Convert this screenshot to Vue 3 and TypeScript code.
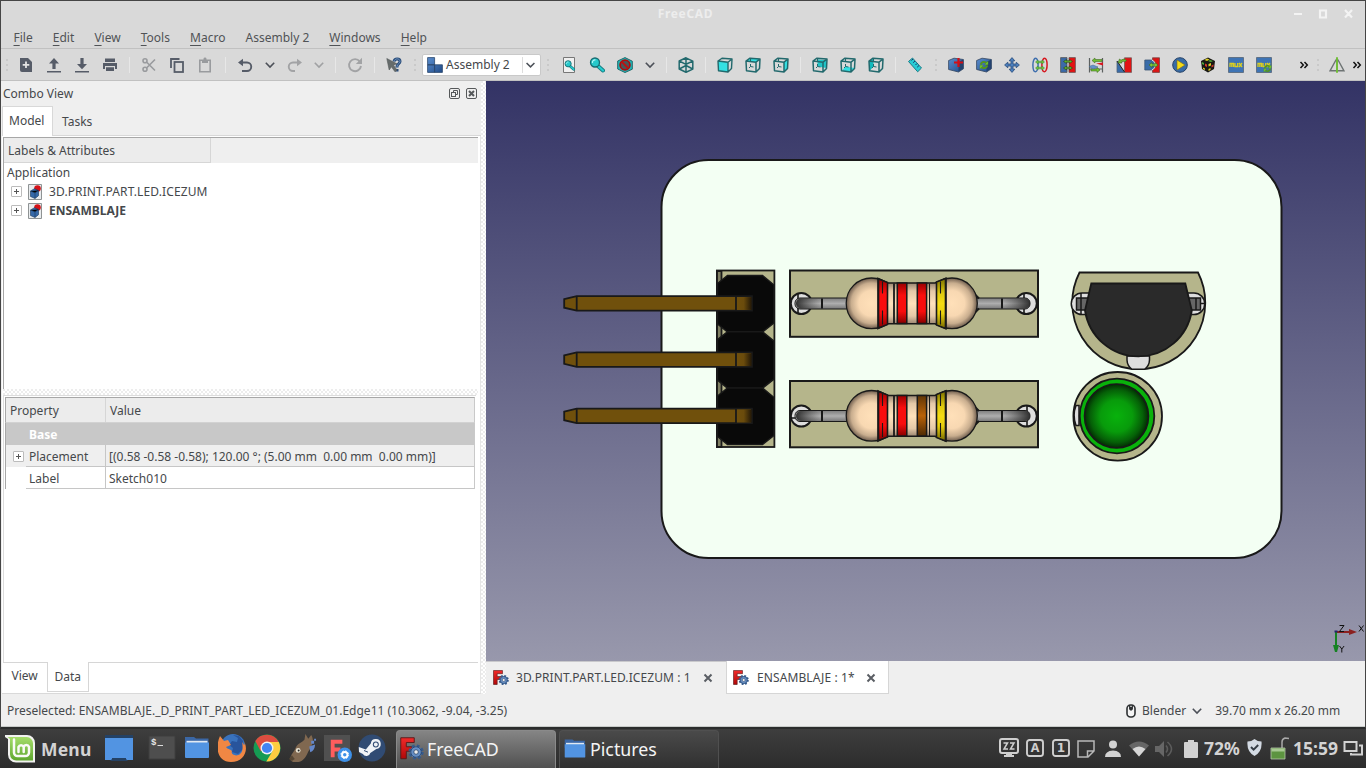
<script setup lang="ts">
interface Tool { icon: string; kind?: 'sep' | 'sep wide' | 'grip' | 'drop' }

const fileTools: string[] = ['new', 'open', 'save', 'print']
const editTools: string[] = ['cut', 'copy', 'paste']
const frontViews: string[] = ['front', 'top', 'right']
const rearViews: string[] = ['rear', 'bottom', 'left']
const assemblyTools: string[] = [
  'part-add', 'part-update', 'move', 'circular', 'plane', 'axial',
  'angle', 'sphere', 'solve', 'rubik', 'mux', 'mux-update',
]
const tools: Tool[] = [
  ...fileTools.map((icon) => ({ icon })),
  { icon: '', kind: 'sep' },
  ...editTools.map((icon) => ({ icon })),
  { icon: '', kind: 'sep wide' },
  { icon: 'undo' }, { icon: 'chev', kind: 'drop' },
  { icon: 'redo' }, { icon: 'chev-off', kind: 'drop' },
  { icon: '', kind: 'sep' },
  { icon: 'refresh' },
  { icon: '', kind: 'sep' },
  { icon: 'whats' },
  { icon: '', kind: 'grip' },
]
const viewTools: Tool[] = [
  { icon: '', kind: 'grip' },
  { icon: 'fit' }, { icon: 'fitsel' }, { icon: 'draw' }, { icon: 'chev', kind: 'drop' },
  { icon: '', kind: 'sep' },
  { icon: 'iso' },
  { icon: '', kind: 'sep' },
  ...frontViews.map((icon) => ({ icon })),
  { icon: '', kind: 'sep' },
  ...rearViews.map((icon) => ({ icon })),
  { icon: '', kind: 'sep' },
  { icon: 'ruler' },
]
const menus: [string, string][] = [
  ['F', 'ile'], ['E', 'dit'], ['V', 'iew'], ['T', 'ools'], ['M', 'acro'],
  ['', 'Assembly 2'], ['W', 'indows'], ['H', 'elp'],
]
const placement = '[(0.58 -0.58 -0.58); 120.00 °; (5.00 mm  0.00 mm  0.00 mm)]'
const pins: number[] = [303.5, 359.7, 416]
const resistors = [
  { y: 303.5, third: 'url(#bandRed)' },
  { y: 416, third: 'url(#bandBrown)' },
]
const launchers: string[] = ['folder', 'firefox', 'chrome', 'squirrel', 'fcapp', 'steam']
</script>

<template>
  <div class="screen">
    <svg class="defs" width="0" height="0" aria-hidden="true">
      <defs>
        <linearGradient id="blueBox" x1="0" y1="0" x2="1" y2="1"><stop offset="0" stop-color="#5b8fd0" /><stop offset="1" stop-color="#204a87" /></linearGradient>
        <linearGradient id="mint" x1="0" y1="0" x2="0" y2="1"><stop offset="0" stop-color="#a5dd6a" /><stop offset="1" stop-color="#5fa72f" /></linearGradient>
        <linearGradient id="redF" x1="0" y1="0" x2="0" y2="1"><stop offset="0" stop-color="#f02a2a" /><stop offset="1" stop-color="#b00808" /></linearGradient>
      </defs>
      <symbol id="i-new" viewBox="0 0 16 16"><path fill="#565c68" d="M2 1h8l4 4v10H4a2 2 0 0 1-2-2z" /><path stroke="#e4e4e4" stroke-width="1.8" d="M8 4.5v6.6M4.7 7.8h6.6" /></symbol>
      <symbol id="i-open" viewBox="0 0 16 16"><path fill="#565c68" d="M8 1l5 5.4h-3.4V12H6.400V6.400H3zM1 14h14v1.600H1z" /></symbol>
      <symbol id="i-save" viewBox="0 0 16 16"><path fill="#565c68" d="M6.400 1h3.200v6H13l-5 5.200L3 7h3.400zM1 14h14v1.600H1z" /></symbol>
      <symbol id="i-print" viewBox="0 0 16 16"><path fill="#565c68" d="M3 1.500h10V5H3zM1 6h14v6h-2V9H3v3H1zM4 10.200h8V14H4z" /></symbol>
      <symbol id="i-cut" viewBox="0 0 16 16"><g fill="none" stroke="#999b9e" stroke-width="1.600"><circle cx="4" cy="3.800" r="2" /><circle cx="4" cy="12.200" r="2" /><path d="M5.500 5L14 13.500M5.500 11L14 2.500" /></g></symbol>
      <symbol id="i-copy" viewBox="0 0 16 16"><g fill="none" stroke="#565c68" stroke-width="1.800"><path d="M2 11V2h8.500" /><rect x="5.500" y="5" width="8.500" height="10" /></g></symbol>
      <symbol id="i-paste" viewBox="0 0 16 16"><path fill="none" stroke="#999b9e" stroke-width="1.600" d="M2.800 3.200h10.400v11.600H2.800z" /><path fill="#999b9e" d="M5 3h1.500V1.800A1.500 1.500 0 0 1 8 .5a1.500 1.500 0 0 1 1.500 1.300V3H11v3H5z" /></symbol>
      <symbol id="i-undo" viewBox="0 0 16 16"><path fill="none" stroke="#565c68" stroke-width="1.900" d="M5 5.500h5a3.900 3.900 0 0 1 0 8.500H5" /><path fill="#565c68" d="M1 5.500L6 1.800v7.400z" /></symbol>
      <symbol id="i-redo" viewBox="0 0 16 16"><path fill="none" stroke="#a2a3a5" stroke-width="1.900" d="M10 5.500H6A3.900 3.900 0 0 0 6 14h2" /><path fill="#a2a3a5" d="M15 5.500L10 1.800v7.400z" /></symbol>
      <symbol id="i-chev" viewBox="0 0 16 16"><path fill="none" stroke="#4c5058" stroke-width="1.600" d="M3.800 5.800L8 10l4.200-4.200" /></symbol>
      <symbol id="i-chev-off" viewBox="0 0 16 16"><path fill="none" stroke="#a0a1a3" stroke-width="1.600" d="M3.800 5.800L8 10l4.200-4.200" /></symbol>
      <symbol id="i-refresh" viewBox="0 0 16 16"><path fill="none" stroke="#a2a3a5" stroke-width="1.900" d="M12.800 4.500A6 6 0 1 0 14 9" /><path fill="#a2a3a5" d="M15 .8v6.200H8.800z" /></symbol>
      <symbol id="i-whats" viewBox="0 0 16 16"><path fill="none" stroke="#284b78" stroke-width="3" d="M8 4.500C8.500 1 14 1 14 4.500c0 2.500-3 2.200-3 5v1M11 12v2.500" /><path fill="none" stroke="#7194c0" stroke-width="1" d="M8 4.500C8.500 1 14 1 14 4.500c0 2.500-3 2.200-3 5v1" /><path fill="#666c6c" stroke="#555b5b" stroke-width=".6" d="M.8 1.500l10 5.200-3.300 1.500L11 13l-2 1.800-3.600-5L3.200 13z" /></symbol>

      <symbol id="cube" viewBox="0 0 16 16"><g fill="none" stroke="#22696d" stroke-width="1.500" stroke-linejoin="round"><path d="M1 4l4-2.800 10 .8-.5 9.500L11 15l-9.500-1.200zM1 4l10 1.200L15 2M11 5.200V15" /><path stroke-width="1" d="M5.500 2v3M5.500 7v2.500L4 11M5.500 9.500l3 .500" /></g></symbol>
      <symbol id="i-front" viewBox="0 0 16 16"><path fill="#35e0e2" d="M1 4l10 1.200V15l-9.500-1.200z" /><path fill="none" stroke="#22696d" stroke-width="1.400" stroke-linejoin="round" d="M1 4l4-2.800 10 .8-.5 9.500L11 15l-9.500-1.200zM1 4l10 1.200L15 2M11 5.200V15" /></symbol>
      <symbol id="i-top" viewBox="0 0 16 16"><path fill="#35e0e2" d="M1 4l4-2.800L15 2l-4 3.200z" /><use href="#cube" /></symbol>
      <symbol id="i-right" viewBox="0 0 16 16"><path fill="#35e0e2" d="M11 5.200L15 2l-.5 9.500L11 15z" /><use href="#cube" /></symbol>
      <symbol id="i-rear" viewBox="0 0 16 16"><path fill="#1fc4c7" d="M5.500 2.500l9 .5v8l-9-1.500z" /><use href="#cube" /></symbol>
      <symbol id="i-bottom" viewBox="0 0 16 16"><path fill="#35e0e2" d="M2 13.500l3.500-4 9 1.500-3.500 4z" /><use href="#cube" /></symbol>
      <symbol id="i-left" viewBox="0 0 16 16"><path fill="#12babd" d="M1 4l4.500-2.500v8L2 13.500z" /><use href="#cube" /></symbol>
      <symbol id="i-iso" viewBox="0 0 16 16"><path fill="none" stroke="#22696d" stroke-width="1.500" stroke-linejoin="round" d="M8 .8l6.800 3.300v8L8 15.200 1.200 12V4zM1.200 4L8 7.300l6.800-3.200M8 .8v14.400M1.200 12L8 8.500l6.800 3.500" /></symbol>
      <symbol id="lens" viewBox="0 0 16 16"><path stroke="#167c80" stroke-width="4" stroke-linecap="round" d="M9 9l5 4.500" /><path stroke="#24cdd0" stroke-width="2.200" stroke-linecap="round" d="M9 9l5 4.500" /><circle cx="6" cy="5.500" r="4.500" fill="#26c9cb" stroke="#176c72" stroke-width="1.300" /><path fill="none" stroke="#b7f6f6" stroke-width="1.200" d="M3.500 6a2.500 2.500 0 0 1 3-3" /></symbol>
      <symbol id="i-fit" viewBox="0 0 16 16"><path fill="#f0f0f0" stroke="#777" d="M2.500.5h11v15h-11z" /><use href="#lens" x="3" y="3" width="11" height="11" /></symbol>
      <symbol id="i-fitsel" viewBox="0 0 16 16"><use href="#lens" width="16" height="16" /></symbol>
      <symbol id="i-draw" viewBox="0 0 16 16"><path fill="#1fb9bb" stroke="#226a6c" d="M8 .6l7.300 3.600v8L8 15.500.7 12V4z" /><circle cx="8" cy="8" r="4.900" fill="#47595a" stroke="#b00c0c" stroke-width="1.800" /><path stroke="#c01010" stroke-width="2" d="M4.600 4.600l6.800 6.800" /></symbol>
      <symbol id="i-ruler" viewBox="0 0 16 16"><path fill="#29cbd3" stroke="#1d7d87" d="M1.500 4.500l4-3.500 9 10-3.800 3.800z" /><path stroke="#115" stroke-width=".8" d="M6 2l-1.500 1.500M8 4L6.200 5.700M10 6.500L8.500 8M12 8.500l-1.800 1.700" /></symbol>
      <symbol id="box" viewBox="0 0 16 16"><path fill="url(#blueBox)" stroke="#34455e" stroke-width=".8" d="M.6 3.500L6 1.200l9.400 1.300v9.300L10.500 15 .6 12.500z" /><path fill="#23426f" d="M10.500 5l4.700-2.400v9L10.500 14.600z" /></symbol>
      <symbol id="i-part-add" viewBox="0 0 16 16"><use href="#box" /><path stroke="#d40f16" stroke-width="2.200" d="M10.500 1v9M6 5.500h9" /></symbol>
      <symbol id="sync" viewBox="0 0 16 16"><path fill="none" stroke="#53941f" stroke-width="3" d="M3 7.500C3.500 2.500 10 2 12 5M13 8.500C12.500 13.500 6 14 4 11" /><path fill="#73c92c" stroke="#4e8a1c" stroke-width=".5" d="M14.500 1.500v6H9zM1.500 14.500v-6H7z" /></symbol>
      <symbol id="i-part-update" viewBox="0 0 16 16"><use href="#box" /><use href="#sync" x="3" y="3" width="10" height="10" /></symbol>
      <symbol id="i-move" viewBox="0 0 16 16"><path fill="#4c7fbd" stroke="#274a78" stroke-width=".8" d="M8 .6l2.800 3.200H9v3.200h3.200V5.200L15.400 8l-3.200 2.800V9H9v3.200h1.800L8 15.400l-2.800-3.200H7V9H3.800v1.800L.6 8l3.200-2.800V7H7V3.800H5.200z" /></symbol>
      <symbol id="i-circular" viewBox="0 0 16 16"><ellipse cx="3.500" cy="8" rx="2.600" ry="6.800" fill="none" stroke="#3f6fae" stroke-width="1.500" /><ellipse cx="12.500" cy="8" rx="2.600" ry="6.800" fill="none" stroke="#d61820" stroke-width="1.500" /><path fill="#70c230" stroke="#384" stroke-width=".5" d="M3.500 5L6 3v1.200h4V3l2.500 2L10 7V5.800H6V7zM3.500 11L6 9v1.200h4V9l2.500 2L10 13v-1.200H6V13z" /></symbol>
      <symbol id="i-plane" viewBox="0 0 16 16"><path fill="#3b6aa8" stroke="#555" stroke-width=".8" d="M.6.6H7v14.800H.6z" /><path fill="#e31313" stroke="#655" stroke-width=".8" d="M9 .6h6.400v14.800H9z" /><path fill="#61b52a" stroke="#263d1b" stroke-width=".6" d="M3.500 4.500l3-2v1.200h3V2.500l3 2-3 2V5.300h-3v1.200zM3.500 11l3-2v1.200h3V9l3 2-3 2v-1.200h-3V13z" /></symbol>
      <symbol id="i-axial" viewBox="0 0 16 16"><path stroke="#5c6060" stroke-width="1.200" d="M1.500 1v14.500M14.500 1v14.500M1.500 12h13" /><path fill="#70c230" stroke="#456b26" stroke-width=".6" d="M4 3.500L7 1v1.500h7v2H7V6zM12 13l-3-2.500V12H3v2h6v1.500z" /><path fill="#d91620" d="M8 6.500l7-1v3z" /><path fill="#6593ca" stroke="#43678f" stroke-width=".5" d="M1 9.500l4-1.500 5 2-5 2z" /></symbol>
      <symbol id="i-angle" viewBox="0 0 16 16"><path fill="#e11414" stroke="#735c5c" stroke-width=".8" d="M8.500.8h7v14.600h-7z" /><path fill="#386ba9" stroke="#516377" stroke-width=".8" d="M1 4.500l7.500 10.900H1z" /><path stroke="#222" d="M1 4l7.500 11" /><path fill="#72be37" stroke="#3b6220" stroke-width=".6" d="M2 6l1.500-4L5 3.200Q8 .8 10.500 3.500L9 5Q7 3.500 5.500 5L6 6z" /></symbol>
      <symbol id="i-sphere" viewBox="0 0 16 16"><path fill="#dc1515" stroke="#784343" stroke-width=".8" d="M8.500.8h7v14.600h-7v-3a5 5 0 0 0 0-8.700z" /><path fill="#386ba9" stroke="#3d5675" stroke-width=".8" d="M.8 3h5.700a5 5 0 0 1 0 10H.8z" /><path fill="none" stroke="#e8e8e8" stroke-width="1" d="M8 3a5.400 5.400 0 0 1 0 10" /><path fill="#7ac53d" stroke="#395e20" stroke-width=".6" d="M5 8l3-2.500V7h3V5.500L14 8l-3 2.500V9H8v1.500z" /></symbol>
      <symbol id="i-solve" viewBox="0 0 16 16"><circle cx="8" cy="8" r="7.300" fill="#386ca8" stroke="#274368" /><path fill="#f4db18" stroke="#7c6b1c" stroke-width=".6" d="M5 3l8 5-8 5z" /></symbol>
      <symbol id="i-rubik" viewBox="0 0 16 16"><path fill="#191913" d="M1 4l7-3.500L15 4l-1 8-6 3.600L2 12z" /><path fill="#ddcd26" d="M7 1.500l2.500 1L7 4 4.500 3zM8.500 7l2.500-1v2.500l-2.500 1zM3 10.500l2 1v1.500l-2-1zM8.500 12l2-1v2l-2 1z" /><path fill="#4da83a" d="M10 3l3 1-2 1-3-1zM2 5l2 1v2L2 7z" /><path fill="#d2382a" d="M5 6.500l2 1V10l-2-1zM11.500 8.500l2-1v2l-2 1z" /></symbol>
      <symbol id="i-mux" viewBox="0 0 16 16"><path fill="#3e74b5" stroke="#566476" stroke-width=".8" d="M.5.500h15v15H.5z" /><path fill="none" stroke="#dace22" stroke-width="1.300" d="M2 10V6.500h3.500V10M3.800 6.500V10M7 6v3.500h2.700V6M11 6l3 4M14 6l-3 4" /></symbol>
      <symbol id="i-mux-update" viewBox="0 0 16 16"><use href="#i-mux" /><use href="#sync" x="7" y="7" width="9" height="9" /></symbol>
      <symbol id="i-more" viewBox="0 0 10 10"><path fill="none" stroke="#111" stroke-width="1.500" d="M1.500 2L4.300 5 1.500 8M5.500 2l2.800 3-2.800 3" /></symbol>
      <symbol id="i-draft" viewBox="0 0 16 16"><path fill="none" stroke="#6e7474" stroke-width="1.400" d="M7.200 2.500L1 13.800h6.200M8.800 2.500L15 13.800H8.800" /><path stroke="#66bb28" stroke-width="1.800" d="M8 .3v15.400" /></symbol>
      <symbol id="i-wb" viewBox="0 0 16 16"><path fill="url(#blueBox)" stroke="#2b466b" stroke-width=".8" d="M.6.600h7v7.200h-7zM.6 7.800h7v7.600h-7zM7.600 7.800h7.800v7.600H7.600z" /></symbol>

      <symbol id="i-fc" viewBox="0 0 16 16"><path fill="url(#redF)" stroke="#541818" stroke-width=".6" d="M.5.500h9v3.200H4.200v2.800H8v3H4.200v5H.5z" /><g stroke="#243e62"><circle cx="10.700" cy="10" r="4" fill="#5b86bd" stroke="#355a8c" stroke-width="2.200" stroke-dasharray="1.700 1.450" /><circle cx="10.700" cy="10" r="3.500" fill="#668fc5" stroke-width=".5" /><circle cx="10.700" cy="10" r="1.500" fill="#ededed" stroke-width=".5" /></g></symbol>
      <symbol id="i-doc" viewBox="0 0 14 16"><path fill="#e9ecee" stroke="#8f9394" d="M.5.500h13v15H.5z" /><circle cx="9.500" cy="4.500" r="3.300" fill="#d51118" /><path fill="#3568a8" stroke="#1b3559" stroke-width=".6" d="M2.500 7l4-2.300 4 1.800v5.200L7 14.500l-4.500-2z" /><path stroke="#1b3559" stroke-width=".6" d="M2.500 7L7 8.800l3.500-2.300M7 8.800v5.600" /></symbol>

      <symbol id="i-mint" viewBox="0 0 30 28"><path fill="#f2f2f0" d="M0 0h22a8 8 0 0 1 8 8v19.500H11a8 8 0 0 1-8-8V4L0 2z" /><path fill="url(#mint)" d="M2.500 2h19.300A6.300 6.300 0 0 1 28 8.300V25.500H11.200A6.200 6.200 0 0 1 5 19.300V4z" /><path fill="none" stroke="#fafaf7" stroke-width="2.500" stroke-linecap="round" d="M9 4.500v13a3.600 3.600 0 0 0 3.600 3.600h7.800a3.600 3.600 0 0 0 3.600-3.600V12a2.800 2.800 0 0 0-5.300 0v5M18.700 12a2.800 2.800 0 0 0-5.200 0v5" /></symbol>
      <symbol id="i-desktop" viewBox="0 0 28 28"><path fill="#5294e2" d="M0 1h28v25H0z" /><path fill="#244164" d="M0 1h28v3H0zM7 24h14v1l2 2H5l2-2z" /></symbol>
      <symbol id="i-folder" viewBox="0 0 28 28"><path fill="#3b67a5" d="M2 3h9l2 1.500h12.500v8H2z" /><path fill="#e1e9f2" d="M3.500 6.800h21v3h-21z" /><path fill="#5294e2" d="M2 8.500h24V23a1 1 0 0 1-1 1H3a1 1 0 0 1-1-1z" /></symbol>
      <symbol id="i-firefox" viewBox="0 0 28 28"><circle cx="15" cy="12" r="12" fill="#3972bd" /><path fill="#28549c" d="M15 1l5 3-1 4-5-1-3 4 4 3-1 4 6 2 5-5V7l-4-5z" /><path fill="#f08744" d="M2 2l4 5 4-1 3 5-5 2c1 2 4 2 6 4-2 4 5 6 8 3 3-2 3-8 2-12l2 3c2-1-1-5-1-5 7 9 1 22-12 22C-1 28-3 13 2 2z" /></symbol>
      <symbol id="i-chrome" viewBox="0 0 28 28"><circle cx="14" cy="14" r="13.500" fill="#159b53" /><path fill="#dd4d40" d="M2.300 7A13.500 13.500 0 0 1 25.700 8H14l-6.200 9.500z" /><path fill="#fecd40" d="M14 8h11.800A13.500 13.500 0 0 1 13.300 27.500l6-10z" /><circle cx="14" cy="14" r="6.500" fill="#f2f2f2" /><circle cx="14" cy="14" r="5.100" fill="#4284f3" /></symbol>
      <symbol id="i-squirrel" viewBox="0 0 29 29"><path fill="#806850" d="M1 26c1-5 4-7 6-12 2-4 6-5 9-8l1-6 3 5 3-4c4 6 0 13-3 17-2 5-5 10-10 11-4 1-8 0-9-3z" /><path fill="#554634" d="M0 26l3-4 3 4-3 2z" /><circle cx="9.500" cy="17" r="2.500" fill="#e8e3d2" /><circle cx="10" cy="17" r="1" fill="#222" /><path fill="#6588ca" d="M21 13l6-2c0 4-2 7-5 8zM23 7h3v3h-3zM26 5h2v2h-2z" /></symbol>
      <symbol id="i-fcapp" viewBox="0 0 29 29"><path fill="#505050" d="M0 1h27v27H0z" /><path fill="#ff5d5d" d="M7 6h12v4h-8v4h6v4h-6v6H7z" /><circle cx="21.500" cy="21.500" r="7.500" fill="#3e91e8" /><circle cx="21.500" cy="21.500" r="2.800" fill="none" stroke="#fff" stroke-width="2" /><circle cx="21.500" cy="21.500" r="4" fill="none" stroke="#fff" stroke-dasharray="1.600 1.540" /></symbol>
      <symbol id="i-steam" viewBox="0 0 28 28"><circle cx="14" cy="14" r="13.500" fill="#304b73" /><path fill="#f0f3f7" d="M.8 13l7 2.500 5-6a5 5 0 1 1 5.500 5.500l-6 4a4 4 0 0 1-7.400 1L1 18z" /><circle cx="17.800" cy="10.500" r="3" fill="#304b73" /><circle cx="17.800" cy="10.500" r="1.900" fill="#f0f3f7" /><path fill="none" stroke="#304b73" stroke-width="1" d="M6 16.500l4 1.700" /></symbol>
    </svg>

    <main class="window">
      <header class="titlebar">
        <span class="title">FreeCAD</span>
        <svg class="winbtns" width="60" height="12" viewBox="0 0 60 12"><path fill="#f3f3f3" d="M1 5h8v2H1z" /><path fill="none" stroke="#f3f3f3" stroke-width="2.200" d="M27 2.500h6v7h-6zM52 2l7 7.500M59 2l-7 7.500" /></svg>
      </header>
      <nav class="menubar">
        <span v-for="m in menus" :key="m[1]" class="menu"><u v-if="m[0]">{{ m[0] }}</u>{{ m[1] }}</span>
      </nav>
      <div class="toolbar">
        <span class="grip first"></span>
        <span v-for="(t, i) in tools" :key="'a' + i" :class="t.kind ?? 'tool'">
          <svg v-if="t.icon" width="16" height="16"><use :href="'#i-' + t.icon" /></svg>
        </span>
        <div class="combo">
          <svg width="16" height="16"><use href="#i-wb" /></svg>
          <span>Assembly 2</span>
          <svg class="combo-arrow" width="16" height="16"><use href="#i-chev" /></svg>
        </div>
        <span v-for="(t, i) in viewTools" :key="'b' + i" :class="t.kind ?? 'tool'">
          <svg v-if="t.icon" width="16" height="16"><use :href="'#i-' + t.icon" /></svg>
        </span>
        <span class="grip narrow"></span>
        <span v-for="t in assemblyTools" :key="t" class="tool">
          <svg width="16" height="16"><use :href="'#i-' + t" /></svg>
        </span>
        <svg class="more" width="10" height="10"><use href="#i-more" /></svg>
        <span class="grip last"></span>
        <svg class="draft" width="16" height="16"><use href="#i-draft" /></svg>
        <svg class="more-end" width="10" height="10"><use href="#i-more" /></svg>
      </div>

      <div class="work">
        <aside class="dock">
          <div class="dock-head">
            <span>Combo View</span>
            <svg width="29" height="12" viewBox="0 0 29 12"><g fill="none" stroke="#55585a"><rect x=".5" y=".5" width="10" height="10" rx="1.500" /><rect x="2.500" y="4.500" width="4" height="4" /><path d="M4.500 4.500v-2h4v4h-2" /><rect x="17.500" y=".5" width="10" height="10" rx="1.500" /><path stroke-width="2" d="M20 3l5 5M25 3l-5 5" /></g></svg>
          </div>
          <div class="tabs"><span class="tab on">Model</span><span class="tab">Tasks</span></div>
          <div class="pane">
            <section class="tree">
              <div class="tree-head"><span>Labels &amp; Attributes</span></div>
              <div class="root">Application</div>
              <div class="node"><i class="plus"></i><svg width="14" height="16"><use href="#i-doc" /></svg><span>3D.PRINT.PART.LED.ICEZUM</span></div>
              <div class="node"><i class="plus"></i><svg width="14" height="16"><use href="#i-doc" /></svg><b>ENSAMBLAJE</b></div>
            </section>
            <div class="hsplit"></div>
            <section class="props">
              <div class="prop head"><span class="name">Property</span><span class="val">Value</span></div>
              <div class="prop group"><span class="name">Base</span></div>
              <div class="prop alt"><i class="plus"></i><span class="name">Placement</span><span class="val pre">{{ placement }}</span></div>
              <div class="prop"><span class="name">Label</span><span class="val">Sketch010</span></div>
            </section>
            <div class="btabs"><span class="btab">View</span><span class="btab on">Data</span><span class="rest"></span></div>
          </div>
        </aside>
        <div class="vsplit"></div>
        <section class="view">
          <svg class="scene" width="879" height="580" viewBox="486 81 879 580">
            <defs>
              <linearGradient id="sky" x1="0" y1="0" x2="0" y2="1"><stop offset="0" stop-color="#333365" /><stop offset="1" stop-color="#9898ac" /></linearGradient>
              <linearGradient id="pinEnd"><stop offset="0" stop-color="#70500c" /><stop offset=".5" stop-color="#6a4b0c" /><stop offset="1" stop-color="#231807" /></linearGradient>
              <linearGradient id="lead" x1="0" y1="0" x2="0" y2="1"><stop offset="0" stop-color="#7c7c7c" /><stop offset=".5" stop-color="#aeaeae" /><stop offset="1" stop-color="#767676" /></linearGradient>
              <linearGradient id="fadeL"><stop offset="0" stop-color="#222" stop-opacity=".9" /><stop offset="1" stop-color="#444" stop-opacity="0" /></linearGradient>
              <linearGradient id="fadeR"><stop offset="0" stop-color="#444" stop-opacity="0" /><stop offset="1" stop-color="#222" stop-opacity=".9" /></linearGradient>
              <radialGradient id="ball"><stop offset="0" stop-color="#ffe0b9" /><stop offset=".5" stop-color="#f8d8b2" /><stop offset=".8" stop-color="#c8ad8e" /><stop offset="1" stop-color="#6c5b4c" /></radialGradient>
              <linearGradient id="neck" x1="0" y1="0" x2="0" y2="1"><stop offset="0" stop-color="#6d5e50" /><stop offset=".25" stop-color="#e4c8a7" /><stop offset=".5" stop-color="#ffe1bb" /><stop offset=".75" stop-color="#e4c8a7" /><stop offset="1" stop-color="#6d5e50" /></linearGradient>
              <linearGradient id="bandRed" x1="0" y1="0" x2="0" y2="1"><stop offset="0" stop-color="#900" /><stop offset=".3" stop-color="#f90d0d" /><stop offset=".7" stop-color="#f90d0d" /><stop offset="1" stop-color="#850000" /></linearGradient>
              <linearGradient id="bandBrown" x1="0" y1="0" x2="0" y2="1"><stop offset="0" stop-color="#603505" /><stop offset=".5" stop-color="#b96208" /><stop offset="1" stop-color="#4c2a04" /></linearGradient>
              <linearGradient id="bandGold" x1="0" y1="0" x2="0" y2="1"><stop offset="0" stop-color="#7c7100" /><stop offset=".3" stop-color="#dfc90d" /><stop offset=".5" stop-color="#f5db12" /><stop offset=".7" stop-color="#e8cf0e" /><stop offset="1" stop-color="#756800" /></linearGradient>
              <radialGradient id="led"><stop offset="0" stop-color="#08b20c" /><stop offset=".5" stop-color="#089b0b" /><stop offset=".82" stop-color="#056007" /><stop offset="1" stop-color="#022b03" /></radialGradient>
            </defs>
            <rect x="486" y="81" width="880" height="580" fill="url(#sky)" />
            <rect x="661.500" y="160" width="620" height="398" rx="47" fill="#f3fff3" stroke="#191919" stroke-width="2" />

            <g stroke="#191919" stroke-width="1.800">
              <rect x="716.900" y="270.500" width="57.500" height="176.500" fill="#b5b58b" />
              <path fill="#7f7f62" d="M717 271h4.500v176H717z" />
              <path v-for="y in pins" :key="'k' + y" fill="#090909" stroke-width="1.500" :d="`M717.500 ${y - 20}l10-8h35l11.500 9.500v38l-11.500 9h-35l-10-8z`" />
              <g v-for="y in pins" :key="'p' + y">
                <path fill="#70500c" :d="`M564.200 ${y - 4.300}l12.500-3H752V${y + 7.200}H576.700l-12.500-3z`" />
                <rect x="736" :y="y - 6.400" width="15.500" height="12.800" fill="url(#pinEnd)" stroke="none" />
                <path :d="`M576.700 ${y - 7}v14M736 ${y - 7}v14`" />
              </g>
            </g>

            <g fill="#b5b58b" stroke="#191919" stroke-width="2">
              <rect x="790" y="270.500" width="248" height="66.300" />
              <rect x="790" y="381" width="248" height="66.300" />
            </g>
            <g v-for="(r, i) in resistors" :key="i" :transform="`translate(0 ${r.y})`" stroke="#191919">
              <circle cx="801.300" cy="0" r="10.500" fill="#dedede" stroke-width="2" />
              <circle cx="1026.300" cy="0" r="10.500" fill="#dedede" stroke-width="2" />
              <path stroke-width="1.600" :d="i ? 'M791 2h9M1027-10v20' : 'M798-10v20M1024-10v20'" />
              <rect x="795" y="-5.500" width="56" height="11" rx="5" fill="url(#lead)" stroke-width="1" />
              <rect x="973" y="-5.500" width="57" height="11" rx="5" fill="url(#lead)" stroke-width="1" />
              <rect x="796" y="-5" width="24" height="10" rx="5" fill="url(#fadeL)" stroke="none" />
              <rect x="1004" y="-5" width="26" height="10" rx="5" fill="url(#fadeR)" stroke="none" />
              <path stroke-width="2" d="M822-5V5M1002-5V5M975-9l4 4M975 9l4-4" />
              <circle cx="871.500" cy="-.2" r="25.300" fill="url(#ball)" stroke-width="1.300" />
              <circle cx="952" cy="-.2" r="25.300" fill="url(#ball)" stroke-width="1.300" />
              <path fill="url(#neck)" stroke-width="1.600" d="M878-25l10 4.500h47L946-25v50l-11-4.700h-47L878 25z" />
              <path fill="url(#bandRed)" stroke-width="1.600" d="M878.500-24.500l9 3.500v42l-9 3.500z" />
              <rect x="897.300" y="-20.500" width="9.500" height="40.500" fill="url(#bandRed)" stroke-width="1.500" />
              <rect x="917.300" y="-20.500" width="9.300" height="40.500" :fill="r.third" stroke-width="1.500" />
              <path fill="url(#bandGold)" stroke-width="1.600" d="M936.500-21.500l9-3.500v50l-9-3.500z" />
              <path stroke-width="1.800" d="M894-20v40" />
              <path stroke-width="1.100" d="M929.500-20v40M882.500-22v12M882.500 7v14M940.500-22v12M940.500 7v14" />
            </g>

            <g stroke="#191919" stroke-width="1.800">
              <path fill="#b5b58b" d="M1079.500 272.500H1198A66.500 66.500 0 1 1 1079.500 272.500z" />
              <path fill="#dedede" stroke-width="1.500" d="M1091 293h-9a10.500 10.500 0 0 0 0 21.500h9zM1186 293h8a10.500 10.500 0 0 1 0 21.500h-8zM1127 356v4a12 12 0 0 0 5 9.300h12.500a12 12 0 0 0 5-9.300v-4z" />
              <path fill="#666" stroke-width="1.500" d="M1076.500 298h12v12h-12zM1188 298h12.500v12H1188z" />
              <path stroke-width="1.500" d="M1081 293v22M1196 298v12M1201 303.500h4" />
              <path fill="#2a2a2a" d="M1091.300 283.500h94l6.500 27A54 54 0 0 1 1085 310.500z" />
              <circle cx="1117.700" cy="416.300" r="44.300" fill="#b5b58b" />
              <path fill="#dedede" stroke-width="1.500" d="M1079 405.500h-3a28 28 0 0 0 0 20h3z" />
              <circle cx="1117" cy="416" r="37.300" fill="#09b20b" />
              <circle cx="1116.500" cy="416" r="32" fill="url(#led)" stroke-width="1.600" />
            </g>

            <path stroke="#8b2020" stroke-width="2" d="M1336 632h16" /><path fill="#8b2020" d="M1349 629l8 3-8 3z" />
            <path stroke="#168223" stroke-width="2" d="M1336 632v14" /><path fill="#168223" d="M1333 645h6l-2 7h-2z" />
            <path fill="#24246e" d="M1334.500 630.500h3v2h-3z" />
            <path fill="none" stroke="#111" stroke-width="1" d="M1339.500 625.500h4.500l-4.500 6h4.500M1359 625.500l4.500 6M1363.500 625.500l-4.500 6M1339.500 646l2.300 3 2.300-3M1341.800 649v3.500" />
          </svg>
          <div class="docs">
            <div class="doc"><svg width="16" height="16"><use href="#i-fc" /></svg><span>3D.PRINT.PART.LED.ICEZUM : 1</span><svg class="x" width="10" height="10" viewBox="0 0 10 10"><path stroke="#5a5e64" stroke-width="2" d="M1.500 1.500l7 7M8.500 1.500l-7 7" /></svg></div>
            <div class="doc on"><svg width="16" height="16"><use href="#i-fc" /></svg><span>ENSAMBLAJE : 1*</span><svg class="x" width="10" height="10" viewBox="0 0 10 10"><path stroke="#5a5e64" stroke-width="2" d="M1.500 1.500l7 7M8.500 1.500l-7 7" /></svg></div>
          </div>
        </section>
      </div>

      <footer class="status">
        <span class="msg">Preselected: ENSAMBLAJE._D_PRINT_PART_LED_ICEZUM_01.Edge11 (10.3062, -9.04, -3.25)</span>
        <svg width="10" height="14" viewBox="0 0 10 14"><rect x="1" y="1" width="8" height="12" rx="3.500" fill="#f4f4f4" stroke="#2d3032" stroke-width="1.600" /><path stroke="#2d3032" stroke-width="1.300" d="M5 3v3M3.700 1v4q1.300 2 2.600 0V1" fill="none" /></svg>
        <span class="nav">Blender</span>
        <svg class="nav-arrow" width="16" height="16"><use href="#i-chev" /></svg>
        <span class="dims">39.70 mm x 26.20 mm</span>
      </footer>
    </main>

    <div class="taskbar">
      <svg class="mint" width="30" height="28"><use href="#i-mint" /></svg>
      <b class="start">Menu</b>
      <div class="launch">
        <svg class="l-desktop" width="28" height="28"><use href="#i-desktop" /></svg>
        <svg class="l-term" width="28" height="28" viewBox="0 0 28 28"><path fill="#4e4e4e" stroke="#3f3f3f" d="M1 2h26v23H1z" /><text x="3" y="11" font-family="Liberation Mono" font-size="9" font-weight="bold" fill="#e6e6e6">$</text><path stroke="#ddd" stroke-width="1" d="M9.500 11.500H15" /></svg>
        <svg v-for="l in launchers" :key="l" :class="'l-' + l" width="28" height="28"><use :href="'#i-' + l" /></svg>
      </div>
      <div class="task active"><svg width="24" height="24"><use href="#i-fc" /></svg><span>FreeCAD</span></div>
      <div class="task"><svg width="24" height="24"><use href="#i-folder" /></svg><span>Pictures</span></div>
      <div class="tray">
        <svg width="20" height="20" viewBox="0 0 20 20"><rect x="1" y="1" width="18" height="14" rx="2" fill="none" stroke="#cfcfcf" stroke-width="2" /><path fill="#cfcfcf" d="M7 15h6v2h2v2H5v-2h2z" /><path fill="none" stroke="#cfcfcf" stroke-width="1.500" d="M4.500 5h4L5 11h4M11 5h4l-3.500 6h4" /></svg>
        <svg width="18" height="18" viewBox="0 0 18 18"><rect x="1" y="1" width="16" height="16" rx="2.500" fill="none" stroke="#cfcfcf" stroke-width="1.900" /><text x="9" y="13.300" text-anchor="middle" font-size="12.500" font-weight="bold" fill="#cfcfcf">A</text></svg>
        <svg width="18" height="18" viewBox="0 0 18 18"><rect x="1" y="1" width="16" height="16" rx="2.500" fill="none" stroke="#cfcfcf" stroke-width="1.900" /><text class="num" x="9" y="13.200" text-anchor="middle" font-size="12" font-weight="bold" fill="#cfcfcf">1</text></svg>
        <svg class="low" width="18" height="18" viewBox="0 0 18 18"><path fill="none" stroke="#b8b8b8" stroke-width="1.500" d="M1 1h16v10l-6 6H1zM10.500 17v-6H17" /></svg>
        <svg class="low" width="16" height="17" viewBox="0 0 16 17"><circle cx="8" cy="4.500" r="4" fill="#d2d2d2" /><path fill="#d2d2d2" d="M0 17q0-6 8-6.500 8 .5 8 6.500z" /></svg>
        <svg class="low" width="20" height="16" viewBox="0 0 20 16"><path fill="#666" d="M0 4.500q10-8 20 0L10 15.500z" /><path fill="#d6d6d6" d="M3.500 8q6.500-5 13 0L10 15.500z" /></svg>
        <svg class="low" width="18" height="18" viewBox="0 0 18 18"><path fill="#666" d="M0 6h4l5-5v16l-5-5H0z" /><path fill="none" stroke="#5c5c5c" stroke-width="1.600" d="M11 5.500q3 3.500 0 7M12.500 2q8 7 0 14" /></svg>
        <svg class="low" width="14" height="18" viewBox="0 0 14 18"><path fill="#d2d2d2" d="M4 0h6v2h3q1 0 1 1v14q0 1-1 1H1q-1 0-1-1V3q0-1 1-1h3z" /></svg>
        <b>72%</b>
        <svg width="15" height="17" viewBox="0 0 15 17"><path fill="#d3dae3" d="M7.500 0q3 2.500 7 2.500 1 10-7 14.500Q-.5 12.500.500 2.500q4 0 7-2.500z" /><path fill="none" stroke="#343c45" stroke-width="1.900" d="M4 8l2.600 2.700L11.200 6" /></svg>
        <svg width="20" height="24" viewBox="0 0 20 24"><path fill="none" stroke="#a9a9a9" stroke-width="1.500" d="M12 14V6q0-3 3-4l4 .5" /><path fill="#5d9440" stroke="#b5c7aa" stroke-width=".8" d="M1 12h14v11H1z" /><path fill="#a8c993" d="M1.500 12.500h13v3h-13z" /></svg>
        <b>15:59</b>
        <svg width="20" height="16" viewBox="0 0 20 16"><path fill="none" stroke="#d2d2d2" stroke-width="2" d="M1.500 2h12v9h-12zM16 5.500h3V14.500H8V13" /></svg>
      </div>
    </div>
  </div>
</template>

<style>
body { background: #efefef; overflow: hidden; }
</style>

<style scoped>
* { box-sizing: border-box; }
.screen { width: 1366px; height: 768px; display: flex; flex-direction: column; font: 12px/16px "Noto Sans", sans-serif; color: #45484b; overflow: hidden; white-space: nowrap; }
.defs { position: absolute; }
svg { flex: none; display: block; }
.window { height: 729px; flex: none; display: flex; flex-direction: column; border: 1px solid #454545; border-bottom-width: 2px; border-bottom-color: #2b2d2d; background: #efefef; }
.titlebar { height: 24px; flex: none; background: #d9d9d9; display: grid; grid-template-columns: 1fr 72px; align-items: center; padding-top: 1px; }
.title { text-align: center; font-weight: 700; font-size: 12px; letter-spacing: .7px; color: #ededed; padding-left: 77px; }
.menubar { height: 23px; flex: none; background: #d9d9d9; display: flex; padding: 5px 0 0 12.500px; color: #505356; }
.menu { margin-right: 20.100px; }
.menu u { text-underline-offset: 3px; text-decoration-thickness: 1px; text-decoration-skip-ink: none; }
.toolbar { height: 33px; flex: none; display: flex; align-items: center; background: #d9d9d9; border-top: 1px solid #c1c1c1; border-bottom: 1px solid #c1c1c1; }
.toolbar > * { flex: none; }
.tool { width: 28px; display: flex; justify-content: center; }
.drop { width: 21.5px; display: flex; justify-content: center; }
.combo ~ .drop { width: 22px; }
.sep { width: 11px; height: 16px; background: linear-gradient(#e7e7e7, #e7e7e7) center / 1px 100% no-repeat; }
.sep.wide { width: 12px; }
.grip { width: 14px; height: 14px; background: repeating-linear-gradient(#c9c9c9 0 2px, transparent 2px 5px) center / 2px 12px no-repeat; }
.grip.first { width: 11px; }
.grip.narrow { width: 13px; }
.grip.last { margin-left: 2px; }
.combo { width: 119px; height: 22px; background: #fff; border: 1px solid #c9c9c9; border-radius: 2px; display: flex; align-items: center; gap: 3px; padding-left: 4px; }
.combo-arrow { margin-left: 9px; border-left: 1px solid #ddd; }
.more { margin-left: 21px; }
.draft { margin-left: 4px; }
.more-end { margin-left: 7px; }

.work { height: 613px; flex: none; display: flex; }
.dock { width: 480px; display: flex; flex-direction: column; padding-left: 1px; }
.dock-head { height: 25px; flex: none; display: flex; justify-content: space-between; align-items: center; padding: 0 3px 0 1px; }
.tabs { height: 30px; flex: none; display: flex; align-items: stretch; box-shadow: inset 0 -1px #d8d8d8; }
.tab { padding: 8px 9px 0; }
.tab.on { padding: 6px 6px 0; background: #fff; border: 1px solid #d8d8d8; border-bottom: 0; width: 51px; }
.pane { flex: 1; background: #fff; display: flex; flex-direction: column; border-right: 1px solid #e6e6e6; border-bottom: 1px solid #d9d9d9; padding: 1px 2px 0 1px; }
.tree { height: 252px; flex: none; border-top: 1px solid #a7a7a7; border-left: 1px solid #a7a7a7; }
.tree-head { height: 25px; background: #efefef; }
.tree-head span { display: block; width: 207px; height: 25px; padding: 5px 4px 0; background: #ececec; border-right: 1px solid #d6d6d6; border-bottom: 1px solid #d6d6d6; }
.root { padding: 2px 3px 0; height: 19px; }
.node { height: 19px; display: flex; align-items: center; padding-left: 7px; }
.node svg { margin: 0 7px 0 6px; }
.node span { letter-spacing: .12px; }
.plus { width: 11px; height: 11px; flex: none; border: 1px solid #bcbcbc; border-radius: 1px; background: linear-gradient(#555, #555) center / 5px 1px no-repeat, linear-gradient(#555, #555) center / 1px 5px no-repeat, #fff; }
.hsplit { height: 6px; flex: none; background: conic-gradient(#fff 25%, #ececec 0 50%, #fff 0 75%, #ececec 0) 0 0 / 4px 4px; }
.props { height: 267px; margin: 0 2px 0 0; border-left: 1px solid #dcdcdc; border-top: 1px solid #dcdcdc; padding: 1px 0 0 1px; flex: none; }
.prop { height: 22px; width: 470px; display: flex; align-items: center; border-left: 1px solid #a7a7a7; border-right: 1px solid #c9c9c9; background: linear-gradient(#c6c6c6, #c6c6c6) 20px 100% / 100% 1px no-repeat; }
.prop .name { width: 99px; flex: none; padding: 1px 0 0 23px; }
.prop .val { flex: 1; height: 100%; border-left: 1px solid #c6c6c6; padding: 4px 0 0 3px; }
.prop.head { height: 26px; background: #ececec; border-top: 1px solid #a7a7a7; border-bottom: 1px solid #d2d2d2; }
.prop.head .name { padding-left: 4px; }
.prop.head .val { padding: 5px 4px 0; border-color: #d6d6d6; }
.prop.group { background: #c8c8c8; color: #fff; font-weight: 700; }
.prop.alt { background: linear-gradient(#c6c6c6, #c6c6c6) 20px 100% / 100% 1px no-repeat, #efefef; padding-left: 7px; }
.prop.alt .name { width: 81px; padding-left: 5px; }
.pre { white-space: pre; }
.btabs { height: 30px; display: flex; flex: none; }
.btab { width: 44px; padding: 5px 0 0 8.500px; border-top: 1px solid #d6d6d6; }
.btab.on { width: 42px; padding: 7px 0 0 6.500px; border: 1px solid #d6d6d6; border-top: 0; }
.rest { flex: 1; border-top: 1px solid #d6d6d6; }
.vsplit { width: 5px; background: conic-gradient(#fff 25%, #ececec 0 50%, #fff 0 75%, #ececec 0) 0 0 / 4px 4px; }
.view { width: 879px; display: flex; flex-direction: column; }
.docs { display: flex; height: 33px; }
.doc { width: 240px; padding-left: 7px; display: flex; align-items: center; padding-bottom: 1px; border-top: 1px solid #c9c9cc; }
.doc span { margin-left: 7px; letter-spacing: .1px; }
.doc .x { margin-left: auto; margin-right: 13px; }
.doc.on { width: 163px; background: #fff; border: 1px solid #d6d6d6; border-top: 0; padding-left: 6px; padding-bottom: 0; padding-top: 1px; }
.doc.on span { margin-left: 8px; }
.doc.on .x { margin-right: 12px; }

.status { flex: 1; display: flex; align-items: center; padding: 1px 0 0 6px; border-bottom: 1px solid #c8cbc9; }
.msg { width: 1119px; }
.nav { margin-left: 6px; }
.nav-arrow { margin-left: 3px; }
.dims { margin-left: 10px; }

.taskbar { height: 39px; flex: none; background: linear-gradient(#3e3e3e, #2c2c2c); display: flex; align-items: center; color: #d3d3d3; padding-left: 5px; }
.start { font-size: 17.5px; letter-spacing: .2px; margin-left: 6px; width: 64px; }
.launch { display: flex; align-items: center; width: 291px; margin-top: -1px; }
.l-desktop { margin-right: 15px; }
.l-term { margin-right: 7px; }
.l-folder { margin-right: 7px; }
.l-firefox { margin-right: 7px; }
.l-chrome { margin-right: 8px; }
.l-squirrel { margin-right: 7px; }
.l-fcapp { margin-right: 6px; }
.task { width: 160px; height: 38px; align-self: flex-end; margin-right: 3px; display: flex; align-items: center; padding: 0 0 2px 3px; font-size: 17.800px; color: #f4f4f4; background: linear-gradient(#4a4a4a, #303030); border: 1px solid #505050; border-bottom: 0; border-radius: 4px 4px 0 0; }
.task.active { background: linear-gradient(#858585, #505050); border-color: #8a8a8a; }
.task span { margin-left: 3px; }
.tray { margin-left: auto; display: grid; grid-template-columns: 26px 25px 27px 24px 29px 23px 28px 25px 38px 26px 25px 47px 27px; align-items: center; justify-items: center; font-size: 17.5px; margin-top: -2px; }
.tray text { font-family: "Noto Sans", sans-serif; }
.tray .num { font-family: "DejaVu Sans", sans-serif; }
.tray .low { margin-top: 2px; }
</style>
